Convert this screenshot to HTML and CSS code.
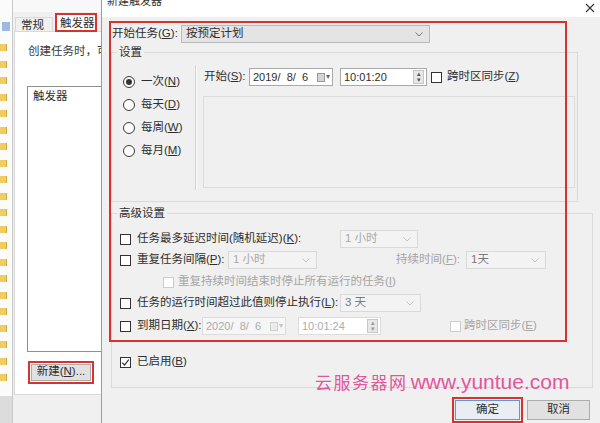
FILE: index.html
```html
<!DOCTYPE html>
<html lang="zh-CN">
<head>
    <meta charset="UTF-8">
    <meta name="viewport" content="width=device-width, initial-scale=1.0">
    <title>新建触发器</title>
    <link rel="stylesheet" href="styles.css">
</head>
<body>
<div class="screen">

    <!-- tree of the task library, mostly hidden -->
    <div class="tree">
        <span class="tree-icon"></span>
        <div class="folders">
            <span class="folder"></span><span class="folder"></span><span class="folder"></span>
            <span class="folder"></span><span class="folder"></span><span class="folder"></span>
            <span class="folder"></span><span class="folder"></span><span class="folder"></span>
            <span class="folder"></span><span class="folder"></span><span class="folder"></span>
            <span class="folder"></span><span class="folder"></span><span class="folder"></span>
            <span class="folder"></span><span class="folder"></span><span class="folder"></span>
            <span class="folder"></span><span class="folder"></span><span class="folder"></span>
        </div>
        <div class="tree-foot"></div>
    </div>

    <!-- task properties window behind the dialog -->
    <div class="props">
        <div class="props-top"></div>
        <div class="tabs">
            <span class="tab">常规</span>
            <span class="tab tab-active">触发器</span>
        </div>
        <div class="tab-page">
            <p class="hint">创建任务时，可以指定触发任务的条件。</p>
            <div class="trigger-list">
                <div class="list-head">触发器</div>
            </div>
            <button class="btn btn-new">新建(<u>N</u>)...</button>
        </div>
    </div>

    <!-- new trigger dialog -->
    <div class="dialog">
        <div class="titlebar">
            <span class="title">新建触发器</span>
            <svg class="close" width="10" height="10" viewBox="0 0 10 10">
                <path d="M1 1L9 9M9 1L1 9" stroke="#333" stroke-width="1.1" fill="none"/>
            </svg>
        </div>

        <div class="dlg-body">
            <div class="row-begin">
                <span class="lbl-begin">开始任务(<u>G</u>):</span>
                <div class="combo combo-main">
                    <span>按预定计划</span>
                    <svg class="chev" width="8" height="5" viewBox="0 0 8 5"><path d="M0.5 0.5L4 4L7.5 0.5" stroke="#777" fill="none"/></svg>
                </div>
            </div>

            <div class="group group-settings">
                <span class="legend">设置</span>
                <div class="settings">
                    <div class="radios">
                        <label class="radio"><span class="dot dot-on"></span><span>一次(<u>N</u>)</span></label>
                        <label class="radio"><span class="dot"></span><span>每天(<u>D</u>)</span></label>
                        <label class="radio"><span class="dot"></span><span>每周(<u>W</u>)</span></label>
                        <label class="radio"><span class="dot"></span><span>每月(<u>M</u>)</span></label>
                    </div>
                    <div class="vsep"></div>
                    <div class="schedule">
                        <div class="row-start">
                            <span class="lbl-start">开始(<u>S</u>):</span>
                            <div class="field date">
                                <span>2019/&nbsp;&nbsp;8/&nbsp;&nbsp;6</span>
                                <span class="cal"><span class="cal-page"></span><span class="cal-arrow">▾</span></span>
                            </div>
                            <div class="field time">
                                <span>10:01:20</span>
                                <span class="spin"><span>▴</span><span>▾</span></span>
                            </div>
                            <span class="check check-start"></span>
                            <span class="check-text">跨时区同步(<u>Z</u>)</span>
                        </div>
                        <div class="recur"></div>
                    </div>
                </div>
            </div>

            <div class="group group-adv">
                <span class="legend">高级设置</span>
                <div class="adv-row r1">
                    <span class="check"></span>
                    <span class="lbl-wide">任务最多延迟时间(随机延迟)(<u>K</u>):</span>
                    <div class="combo combo-off w78">
                        <span>1 小时</span>
                        <svg class="chev" width="8" height="5" viewBox="0 0 8 5"><path d="M0.5 0.5L4 4L7.5 0.5" stroke="#c4c4c4" fill="none"/></svg>
                    </div>
                </div>
                <div class="adv-row r2">
                    <span class="check"></span>
                    <span class="lbl-repeat">重复任务间隔(<u>P</u>):</span>
                    <div class="combo combo-off w89">
                        <span>1 小时</span>
                        <svg class="chev" width="8" height="5" viewBox="0 0 8 5"><path d="M0.5 0.5L4 4L7.5 0.5" stroke="#c4c4c4" fill="none"/></svg>
                    </div>
                    <span class="lbl-dur off">持续时间(<u>F</u>):</span>
                    <div class="combo combo-off combo-dim w80">
                        <span>1天</span>
                        <svg class="chev" width="8" height="5" viewBox="0 0 8 5"><path d="M0.5 0.5L4 4L7.5 0.5" stroke="#c4c4c4" fill="none"/></svg>
                    </div>
                </div>
                <div class="adv-row r3">
                    <span class="check check-off"></span>
                    <span class="off">重复持续时间结束时停止所有运行的任务(<u>I</u>)</span>
                </div>
                <div class="adv-row r4">
                    <span class="check"></span>
                    <span class="lbl-wide">任务的运行时间超过此值则停止执行(<u>L</u>):</span>
                    <div class="combo combo-off combo-dim w81">
                        <span>3 天</span>
                        <svg class="chev" width="8" height="5" viewBox="0 0 8 5"><path d="M0.5 0.5L4 4L7.5 0.5" stroke="#c4c4c4" fill="none"/></svg>
                    </div>
                </div>
                <div class="adv-row r5">
                    <span class="check"></span>
                    <span class="lbl-expire">到期日期(<u>X</u>):</span>
                    <div class="field date field-off">
                        <span>2020/&nbsp;&nbsp;8/&nbsp;&nbsp;6</span>
                        <span class="cal"><span class="cal-page"></span><span class="cal-arrow">▾</span></span>
                    </div>
                    <div class="field time time-off">
                        <span>10:01:24</span>
                        <span class="spin"><span>▴</span><span>▾</span></span>
                    </div>
                    <span class="check check-off check-utc"></span>
                    <span class="off check-text">跨时区同步(<u>E</u>)</span>
                </div>
                <div class="adv-row r6">
                    <span class="check check-on">
                        <svg width="9" height="9" viewBox="0 0 9 9"><path d="M1.2 4.6L3.5 7L7.8 1.6" stroke="#333" stroke-width="1.2" fill="none"/></svg>
                    </span>
                    <span>已启用(<u>B</u>)</span>
                </div>
            </div>

            <div class="buttons">
                <button class="btn btn-ok">确定</button>
                <button class="btn btn-cancel">取消</button>
            </div>
        </div>
    </div>

    <!-- red annotation frame and watermark on top -->
    <div class="mark-frame"></div>
    <div class="watermark"><span class="wm-cn">云服务器网</span> <span class="wm-url">www.yuntue.com</span></div>
</div>
</body>
</html>
```

FILE: styles.css
```css
* { box-sizing: border-box; }

body {
    margin: 0;
    font-family: "Liberation Sans", "Noto Sans CJK SC", sans-serif;
    font-size: 11.5px;
    line-height: 1;
    color: #2e2e2e;
    background: #f0f0f0;
    white-space: nowrap;
}
u { text-decoration-thickness: 1px; text-underline-offset: 1px; }

.screen {
    position: relative;
    width: 600px;
    height: 423px;
    overflow: hidden;
}

/* left tree */
.tree {
    position: absolute;
    left: 0;
    top: 0;
    width: 13px;
    height: 423px;
    background: #fbfbfb;
    border-right: 1px solid #c9c9c9;
    display: flex;
    flex-direction: column;
}
.tree-icon {
    margin: 22px 0 0 2px;
    width: 8px;
    height: 9px;
    background: #9dbbe0;
}
.folders {
    display: flex;
    flex-direction: column;
    gap: 9.5px;
    margin-top: 13px;
}
.folder {
    width: 7px;
    height: 7px;
    background: #f0cd62;
    border-right: 1px solid #d5a93c;
}
.tree-foot {
    margin-top: auto;
    height: 27px;
    background: #dcdcdc;
}

/* properties window */
.props {
    position: absolute;
    left: 13px;
    top: 0;
    width: 200px;
    height: 423px;
    background: #f0f0f0;
}
.props-top { height: 12px; background: #f8f8f8; }
.tabs {
    display: flex;
    align-items: flex-end;
    gap: 2px;
    height: 20px;
    padding-left: 2px;
}
.tab {
    width: 38px;
    height: 15px;
    padding: 2px 0 0 5px;
    border: 1px solid #d9d9d9;
    border-bottom: none;
}
.tab-active {
    width: 42px;
    height: 19px;
    padding: 3px 0 0 3px;
    background: #fff;
    border: 2px solid #d8322d;
}
.tab-page {
    margin: -1px 0 0 1px;
    height: 364px;
    background: #fff;
    border: 1px solid #d9d9d9;
    padding: 14px 0 0 13px;
}
.hint { margin: 0; color: #3a3a3a; }
.trigger-list {
    margin: 28px 0 0 -1px;
    width: 200px;
    height: 266px;
    border: 1px solid #8f8f8f;
}
.list-head { padding: 4px 5px; }

.btn {
    font: inherit;
    color: #2e2e2e;
    background: #e1e1e1;
    border: 1px solid #adadad;
    padding: 0;
}
.btn-new {
    margin: 12px 0 0 3px;
    width: 60px;
    height: 17px;
    outline: 2px solid #d8322d;
    outline-offset: 1px;
}

/* dialog */
.dialog {
    position: absolute;
    left: 101px;
    top: 0;
    width: 499px;
    height: 423px;
    background: #f0f0f0;
    border-left: 1px solid #9c9c9c;
}
.titlebar {
    height: 17px;
    background: #fff;
    display: flex;
    justify-content: space-between;
    align-items: flex-start;
    padding: 0 5px 0 5px;
    overflow: hidden;
}
.title { font-size: 11px; margin-top: -4px; color: #333; }
.close { margin: 3px 0 0 0; }

.dlg-body { padding-left: 8px; }

.row-begin {
    display: flex;
    align-items: center;
    height: 18px;
    margin-top: 8px;
    padding-left: 2px;
}
.lbl-begin { width: 69px; }

.combo {
    display: flex;
    align-items: center;
    justify-content: space-between;
    height: 18px;
    padding: 0 6px 0 4px;
    border: 1px solid #b9b9b9;
}
.combo-main { width: 249px; background: #e4e4e4; }
.combo-off { background: #f3f3f3; border-color: #d9d9d9; color: #a9a9a9; }
.combo-dim { color: #7a7a7a; }
.w78 { width: 78px; }
.w80 { width: 80px; }
.w81 { width: 81px; }
.w89 { width: 89px; }

.group {
    margin-left: 1px;
    border: 1px solid #dadada;
}
.legend {
    display: block;
    width: fit-content;
    margin: -8px 0 0 5px;
    padding: 1px 2px;
    background: #f0f0f0;
    line-height: 12px;
}
.group-settings {
    margin-top: 9px;
    width: 467px;
    height: 150px;
}
.settings { display: flex; }
.radios {
    width: 83px;
    padding: 11px 0 0 11px;
}
.radio {
    display: flex;
    align-items: center;
    gap: 6px;
    height: 23px;
}
.dot {
    width: 12px;
    height: 12px;
    border: 1px solid #3a3a3a;
    border-radius: 50%;
    background: #fff;
    display: flex;
    align-items: center;
    justify-content: center;
}
.dot-on::after {
    content: "";
    width: 6px;
    height: 6px;
    border-radius: 50%;
    background: #333;
}
.vsep {
    margin-top: 6px;
    width: 2px;
    height: 125px;
    border-left: 1px solid #d3d3d3;
    border-right: 1px solid #fafafa;
}
.schedule { margin-left: 6px; }
.row-start {
    display: flex;
    align-items: center;
    height: 18px;
    margin-top: 9px;
}
.lbl-start { width: 46px; padding-left: 1px; }

.field {
    display: flex;
    align-items: center;
    justify-content: space-between;
    height: 18px;
    padding: 0 2px 0 3px;
    background: #fff;
    border: 1px solid #a9a9a9;
    font-size: 11px;
}
.date { width: 84px; }
.time { width: 87px; margin-left: 7px; }
.field-off { background: #f6f6f6; border-color: #dcdcdc; color: #ababab; }
.time-off { width: 83px; margin-left: 6px; color: #ababab; border-color: #dcdcdc; }
.cal { display: flex; align-items: center; gap: 1px; }
.cal-page {
    width: 8px;
    height: 9px;
    background: #d4d4d4;
    border: 1px solid #9a9a9a;
}
.cal-arrow { font-size: 8px; color: #666; }
.field-off .cal-page { border-color: #cfcfcf; background: #ececec; }
.field-off .cal-arrow { color: #c4c4c4; }
.spin {
    display: flex;
    flex-direction: column;
    width: 11px;
    height: 14px;
    background: #e8e8e8;
    border: 1px solid #c6c6c6;
    font-size: 7px;
    line-height: 6px;
    color: #555;
    text-align: center;
}
.time-off .spin { color: #999; }

.check {
    flex: none;
    width: 11px;
    height: 11px;
    border: 1px solid #333;
    background: #fff;
    display: flex;
    align-items: center;
    justify-content: center;
}
.check-off { border-color: #cdcdcd; }
.check-start { margin-left: 4px; }
.check-text { margin-left: 5px; }
.off { color: #a5a5a5; }

.recur {
    margin-top: 10px;
    width: 372px;
    height: 92px;
    border: 1px solid #dcdcdc;
}

.group-adv {
    margin-top: 11px;
    width: 482px;
    height: 175px;
}
.adv-row {
    display: flex;
    align-items: center;
    gap: 6px;
    height: 20px;
    padding-left: 8px;
}
.r1 { margin-top: 9px; }
.r2 { margin-top: 1px; }
.r3 { margin-top: 2px; padding-left: 51px; gap: 4px; }
.r4 { margin-top: 1px; }
.r5 { margin-top: 3px; }
.r6 { margin-top: 16px; }
.lbl-wide { width: 197px; }
.lbl-repeat { width: 85px; }
.lbl-dur { width: 140px; text-align: right; margin-left: -3px; }
.lbl-expire { width: 59px; }
.check-utc { margin-left: 63px; }
.r5 .check-text { margin-left: -3px; }

.buttons {
    display: flex;
    justify-content: flex-end;
    gap: 7px;
    margin-top: 12px;
    padding-right: 10px;
}
.btn-ok {
    width: 65px;
    height: 20px;
    background: #e8eef4;
    border-color: #5a9ad6;
    outline: 2px solid #d8322d;
    outline-offset: 1px;
}
.btn-cancel { width: 63px; height: 20px; }

/* annotation overlays */
.mark-frame {
    position: absolute;
    left: 109px;
    top: 21px;
    width: 458px;
    height: 321px;
    border: 2px solid #d8322d;
    pointer-events: none;
}
.watermark {
    position: absolute;
    left: 315px;
    top: 371px;
    color: #e2569c;
    pointer-events: none;
}
.wm-cn {
    font-family: "Noto Sans CJK SC", sans-serif;
    font-size: 17px;
    letter-spacing: 1.5px;
}
.wm-url {
    font-size: 21px;
}
```
